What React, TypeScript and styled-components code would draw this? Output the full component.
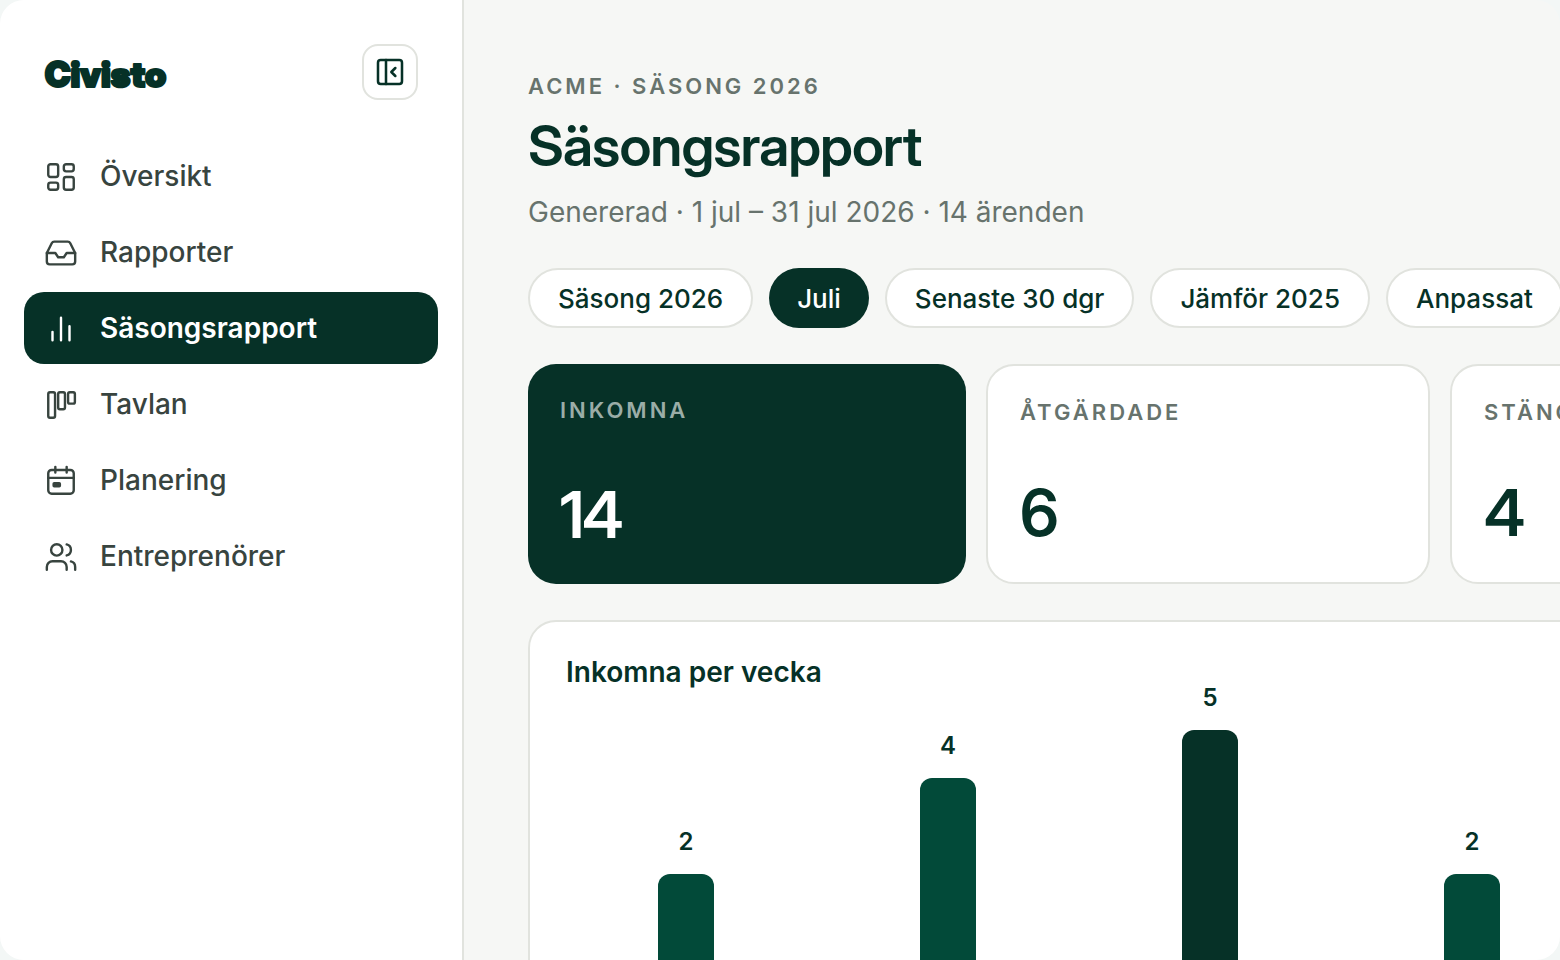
import React from "react";
import styled, { createGlobalStyle } from "styled-components";

const color = {
  ink: "#063127",
  bar: "#024a39",
  nav: "#38443f",
  muted: "#67736d",
  line: "#e1e3de",
  page: "#f6f7f5",
  outer: "#f3f7f6",
};

const displayFont = `"Inter Display", Inter, sans-serif`;

const GlobalStyle = createGlobalStyle`
  * { box-sizing: border-box; }
  body { margin: 0; background: ${color.outer}; font-family: Inter, sans-serif; color: ${color.ink}; }
  h1, h2, p, ul, ol, dl, dd { margin: 0; padding: 0; }
  ul, ol { list-style: none; }
`;

const Shell = styled.div`
  display: flex;
  height: 100vh;
  border-radius: 24px;
  overflow: hidden;
  background: ${color.page};
`;

const Sidebar = styled.aside`
  flex: 0 0 464px;
  padding: 44px 24px;
  background: #fff;
  border-right: 2px solid ${color.line};
`;

const SidebarHead = styled.div`
  display: flex;
  align-items: center;
  justify-content: space-between;
  padding: 0 20px;
  margin-bottom: 40px;
`;

const LogoLink = styled.a`
  display: block;
  height: 56px;
`;

const LogoText = styled.text`
  font-family: ${displayFont};
  font-size: 35px;
  font-weight: 900;
  fill: ${color.ink};
  stroke: ${color.ink};
  stroke-width: 2px;
  stroke-linejoin: round;
`;

const CollapseButton = styled.button`
  display: grid;
  place-items: center;
  width: 56px;
  height: 56px;
  padding: 0;
  color: ${color.ink};
  background: #fff;
  border: 2px solid ${color.line};
  border-radius: 16px;
`;

const NavList = styled.ul`
  display: flex;
  flex-direction: column;
  gap: 4px;
`;

const NavLink = styled.a<{ $active?: boolean }>`
  display: flex;
  align-items: center;
  gap: 22px;
  height: 72px;
  padding: 0 20px;
  border-radius: 20px;
  font-size: 28px;
  line-height: 34px;
  font-weight: ${(p) => (p.$active ? 600 : 500)};
  color: ${(p) => (p.$active ? "#fff" : color.nav)};
  background: ${(p) => (p.$active ? color.ink : "transparent")};
  text-decoration: none;

  svg {
    margin-top: 2px;
  }
`;

const Main = styled.main`
  flex: 1;
  min-width: 0;
  padding: 72px 64px;
  overflow: hidden;
`;

const Report = styled.div`
  min-width: 1364px;
`;

const Eyebrow = styled.p`
  font-size: 22px;
  line-height: 28px;
  font-weight: 600;
  letter-spacing: 3px;
  color: ${color.muted};
  text-transform: uppercase;
`;

const Title = styled.h1`
  margin-top: 12px;
  font-family: ${displayFont};
  font-size: 56px;
  line-height: 68px;
  font-weight: 600;
  letter-spacing: -1px;
`;

const Subtitle = styled.p`
  margin-top: 14px;
  font-size: 28px;
  line-height: 36px;
  color: ${color.muted};
`;

const Filters = styled.div`
  display: flex;
  gap: 16px;
  margin-top: 38px;
`;

const Pill = styled.button<{ $active?: boolean }>`
  height: 60px;
  padding: 2px 28px 0;
  border: ${(p) => (p.$active ? "0" : `2px solid ${color.line}`)};
  border-radius: 30px;
  font-family: inherit;
  font-size: 26px;
  line-height: 32px;
  font-weight: 500;
  white-space: nowrap;
  color: ${(p) => (p.$active ? "#fff" : color.ink)};
  background: ${(p) => (p.$active ? color.ink : "#fff")};
`;

const Stats = styled.dl`
  display: grid;
  grid-template-columns: 438fr 444fr 442fr;
  gap: 20px;
  margin-top: 36px;
`;

const StatCard = styled.div<{ $active?: boolean }>`
  display: flex;
  flex-direction: column;
  justify-content: space-between;
  height: 220px;
  padding: 32px;
  border: ${(p) => (p.$active ? "0" : `2px solid ${color.line}`)};
  border-radius: 28px;
  color: ${(p) => (p.$active ? "#fff" : color.ink)};
  background: ${(p) => (p.$active ? color.ink : "#fff")};
`;

const StatLabel = styled.dt<{ $active?: boolean }>`
  font-size: 22px;
  line-height: 28px;
  font-weight: 600;
  letter-spacing: 3px;
  text-transform: uppercase;
  color: ${(p) => (p.$active ? "#9bada7" : color.muted)};
`;

const StatValue = styled.dd`
  font-family: ${displayFont};
  font-size: 64px;
  line-height: 74px;
  font-weight: 600;
  letter-spacing: -2px;
`;

const Panel = styled.section`
  margin-top: 36px;
  padding: 36px;
  background: #fff;
  border: 2px solid ${color.line};
  border-radius: 28px;
`;

const PanelTitle = styled.h2`
  font-size: 28px;
  line-height: 28px;
  font-weight: 600;
`;

const Chart = styled.ol`
  display: grid;
  grid-template-columns: repeat(5, 1fr);
  align-items: end;
  gap: 22px;
`;

const Column = styled.li`
  display: flex;
  flex-direction: column;
  align-items: center;
  gap: 20px;
`;

const ColumnValue = styled.span`
  font-size: 24px;
  line-height: 24px;
  font-weight: 600;
`;

const Bar = styled.div<{ $peak: boolean }>`
  width: 56px;
  border-radius: 12px 12px 0 0;
  background: ${(p) => (p.$peak ? color.ink : color.bar)};
`;

function Icon({ size = 34, weight = 1.7, children }: { size?: number; weight?: number; children: React.ReactNode }) {
  return (
    <svg
      width={size}
      height={size}
      viewBox="0 0 24 24"
      fill="none"
      stroke="currentColor"
      strokeWidth={weight}
      strokeLinecap="round"
      strokeLinejoin="round"
      aria-hidden="true"
    >
      {children}
    </svg>
  );
}

const navItems = [
  {
    label: "Översikt",
    icon: (
      <>
        <rect x="3" y="3" width="7" height="9" rx="1.6" />
        <rect x="14" y="3" width="7" height="5" rx="1.6" />
        <rect x="14" y="12" width="7" height="9" rx="1.6" />
        <rect x="3" y="16" width="7" height="5" rx="1.6" />
      </>
    ),
  },
  {
    label: "Rapporter",
    icon: (
      <>
        <path d="M22 12h-6l-2 3h-4l-2-3H2" />
        <path d="M5.45 5.11 2 12v6a2 2 0 0 0 2 2h16a2 2 0 0 0 2-2v-6l-3.45-6.89A2 2 0 0 0 16.76 4H7.24a2 2 0 0 0-1.79 1.11z" />
      </>
    ),
  },
  { label: "Säsongsrapport", active: true, icon: <path d="M6 20v-6M12 20V4M18 20V10" /> },
  {
    label: "Tavlan",
    icon: (
      <>
        <rect x="3" y="3" width="4.8" height="18" rx="1.2" />
        <rect x="10" y="3" width="4.8" height="12" rx="1.2" />
        <rect x="17" y="3" width="4.8" height="8" rx="1.2" />
      </>
    ),
  },
  {
    label: "Planering",
    icon: (
      <>
        <rect x="3" y="4.2" width="18" height="16.8" rx="2.4" />
        <path d="M8 2v4M16 2v4M3 9.8h18" />
        <rect x="6.8" y="13.6" width="4.4" height="2.2" rx="0.4" fill="currentColor" />
      </>
    ),
  },
  {
    label: "Entreprenörer",
    icon: (
      <>
        <path d="M16 21v-2a4 4 0 0 0-4-4H6a4 4 0 0 0-4 4v2" />
        <circle cx="9" cy="7" r="4" />
        <path d="M22 21v-2a4 4 0 0 0-3-3.87M16 3.13a4 4 0 0 1 0 7.75" />
      </>
    ),
  },
];

const filters = ["Säsong 2026", "Juli", "Senaste 30 dgr", "Jämför 2025", "Anpassat"];

const stats = [
  { label: "Inkomna", value: 14, active: true },
  { label: "Åtgärdade", value: 6 },
  { label: "Stängda", value: 4 },
];

const weeks = [2, 4, 5, 2];
const peak = Math.max(...weeks);
const unitHeight = 48;

export default function App() {
  return (
    <>
      <GlobalStyle />
      <Shell>
        <Sidebar>
          <SidebarHead>
            <LogoLink href="#" aria-label="Civisto">
              <svg width="128" height="56" viewBox="0 0 128 56">
                <LogoText x="1" y="43">
                  Civisto
                </LogoText>
              </svg>
            </LogoLink>
            <CollapseButton type="button" aria-label="Dölj sidofältet">
              <Icon size={32} weight={1.9}>
                <rect x="3" y="3" width="18" height="18" rx="2" />
                <path d="M9 3v18M16 15l-3-3 3-3" />
              </Icon>
            </CollapseButton>
          </SidebarHead>
          <nav>
            <NavList>
              {navItems.map((item) => (
                <li key={item.label}>
                  <NavLink href="#" $active={item.active} aria-current={item.active ? "page" : undefined}>
                    <Icon>{item.icon}</Icon>
                    {item.label}
                  </NavLink>
                </li>
              ))}
            </NavList>
          </nav>
        </Sidebar>
        <Main>
          <Report>
            <Eyebrow>Acme · Säsong 2026</Eyebrow>
            <Title>Säsongsrapport</Title>
            <Subtitle>Genererad · 1 jul – 31 jul 2026 · 14 ärenden</Subtitle>
            <Filters>
              {filters.map((name) => (
                <Pill key={name} type="button" $active={name === "Juli"} aria-pressed={name === "Juli"}>
                  {name}
                </Pill>
              ))}
            </Filters>
            <Stats>
              {stats.map((stat) => (
                <StatCard key={stat.label} $active={stat.active}>
                  <StatLabel $active={stat.active}>{stat.label}</StatLabel>
                  <StatValue>{stat.value}</StatValue>
                </StatCard>
              ))}
            </Stats>
            <Panel>
              <PanelTitle>Inkomna per vecka</PanelTitle>
              <Chart>
                {weeks.map((count, index) => (
                  <Column key={index}>
                    <ColumnValue>{count}</ColumnValue>
                    <Bar $peak={count === peak} style={{ height: count * unitHeight }} />
                  </Column>
                ))}
              </Chart>
            </Panel>
          </Report>
        </Main>
      </Shell>
    </>
  );
}
